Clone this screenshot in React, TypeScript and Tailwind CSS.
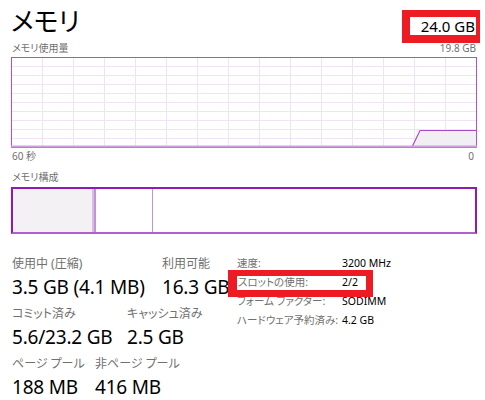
import React from "react";

const font = {
  fontFamily: '"Segoe UI", "Noto Sans", "Noto Sans CJK JP", sans-serif',
};

const UsageGraph = () => {
  const w = 465;
  const h = 90;
  const cols = Array.from({ length: 14 }, (_, i) => (i + 1) * (w / 15));
  const rows = Array.from({ length: 9 }, (_, i) => (i + 1) * (h / 10));
  return (
    <svg width={w + 1} height={h + 1} className="block">
      {cols.map((x) => (
        <line key={"c" + x} x1={Math.round(x) + 0.5} x2={Math.round(x) + 0.5} y1={0} y2={h} stroke="#efe3f4" strokeWidth={1} />
      ))}
      {rows.map((y) => (
        <line key={"r" + y} x1={0} x2={w} y1={Math.round(y) + 0.5} y2={Math.round(y) + 0.5} stroke="#efe3f4" strokeWidth={1} />
      ))}
      <polygon points={`401,${h} 409,73 ${w},73 ${w},${h}`} fill="#f1eff3" />
      <polyline points={`401,${h} 409,73.5 ${w},73.5`} fill="none" stroke="#a94bc8" strokeWidth={1.2} />
      <rect x={0.5} y={0.5} width={w} height={h} fill="none" stroke="#ad52cc" strokeWidth={1} />
      <line x1={0} x2={w + 1} y1={h - 0.5} y2={h - 0.5} stroke="#cf9fe0" strokeWidth={2} />
    </svg>
  );
};

const Stat = ({ label, value, w }: { label: string; value: string; w?: string }) => (
  <div className={`flex flex-col shrink-0 whitespace-nowrap ${w ?? ""}`}>
    <span className="text-[12px] leading-[16px] text-[#707070]">{label}</span>
    <span className="text-[19px] leading-[28px] tracking-[-0.2px] text-black mt-[1px]">{value}</span>
  </div>
);

const Detail = ({ label, value }: { label: string; value: string }) => (
  <div className="flex items-center h-[19px] text-[10.5px] whitespace-nowrap pl-[9px]">
    <span className="w-[105px] text-[#707070]">{label}</span>
    <span className="text-black">{value}</span>
  </div>
);

export default function App() {
  return (
    <div
      className="w-[485px] h-[400px] bg-white pl-[11px] pr-[9px] pt-[4px] overflow-hidden [font-feature-settings:'palt']"
      style={font}
    >
      <div className="flex justify-between items-start">
        <span className="text-[26px] leading-[34px] text-black">メモリ</span>
        <div className="mt-[6px] mr-[-4px] bg-[#ed1c24] pl-[8px] pr-[4px] pt-[7px] pb-[8px]">
          <div className="bg-white w-[66px] h-[18px] flex items-center justify-end pr-[1px] text-[15px] leading-[18px] text-black whitespace-nowrap">
            24.0 GB
          </div>
        </div>
      </div>

      <div className="flex justify-between items-end mt-[-1px] text-[10px] leading-[13px] text-[#707070]">
        <span className="pl-[1px]">メモリ使用量</span>
        <span>19.8 GB</span>
      </div>
      <div className="mt-[2px]">
        <UsageGraph />
      </div>
      <div className="flex justify-between text-[10px] leading-[14px] text-[#707070] mt-[1px]">
        <span className="pl-[1px]">60 秒</span>
        <span className="pr-[2px]">0</span>
      </div>

      <div className="text-[10px] leading-[14px] text-[#707070] mt-[7px] pl-[1px]">メモリ構成</div>
      <div className="mt-[3px] w-[466px] h-[47px] flex border-2 border-[#8e1cb4] border-b-[#b35ed0]">
        <div className="w-[81px] bg-[#f3f1f4] border-r-2 border-[#d7bde2]" />
        <div className="w-[2px] bg-[#c591d8]" />
        <div className="w-[57px] border-r border-[#c88fdc]" />
        <div className="flex-1" />
      </div>

      <div className="flex mt-[22px]">
        <div className="flex flex-col gap-[5px] w-[217px] shrink-0 pl-[1px]">
          <div className="flex">
            <Stat label="使用中 (圧縮)" value="3.5 GB (4.1 MB)" w="w-[150px]" />
            <Stat label="利用可能" value="16.3 GB" />
          </div>
          <div className="flex">
            <Stat label="コミット済み" value="5.6/23.2 GB" w="w-[115px]" />
            <Stat label="キャッシュ済み" value="2.5 GB" />
          </div>
          <div className="flex">
            <Stat label="ページ プール" value="188 MB" w="w-[83px]" />
            <Stat label="非ページ プール" value="416 MB" />
          </div>
        </div>
        <div className="flex flex-col mt-[-2px]">
          <Detail label="速度:" value="3200 MHz" />
          <div className="bg-[#ed1c24] w-[145px] pl-[9px] pt-[6px] pb-[7px] mt-[-3px] mb-[-5px]">
            <div className="bg-white w-[129px] h-[14px] flex items-center text-[10.5px] whitespace-nowrap">
              <span className="w-[105px] pl-[1px] text-[#707070]">スロットの使用:</span>
              <span className="text-black">2/2</span>
            </div>
          </div>
          <Detail label="フォーム ファクター:" value="SODIMM" />
          <Detail label="ハードウェア予約済み:" value="4.2 GB" />
        </div>
      </div>
    </div>
  );
}
